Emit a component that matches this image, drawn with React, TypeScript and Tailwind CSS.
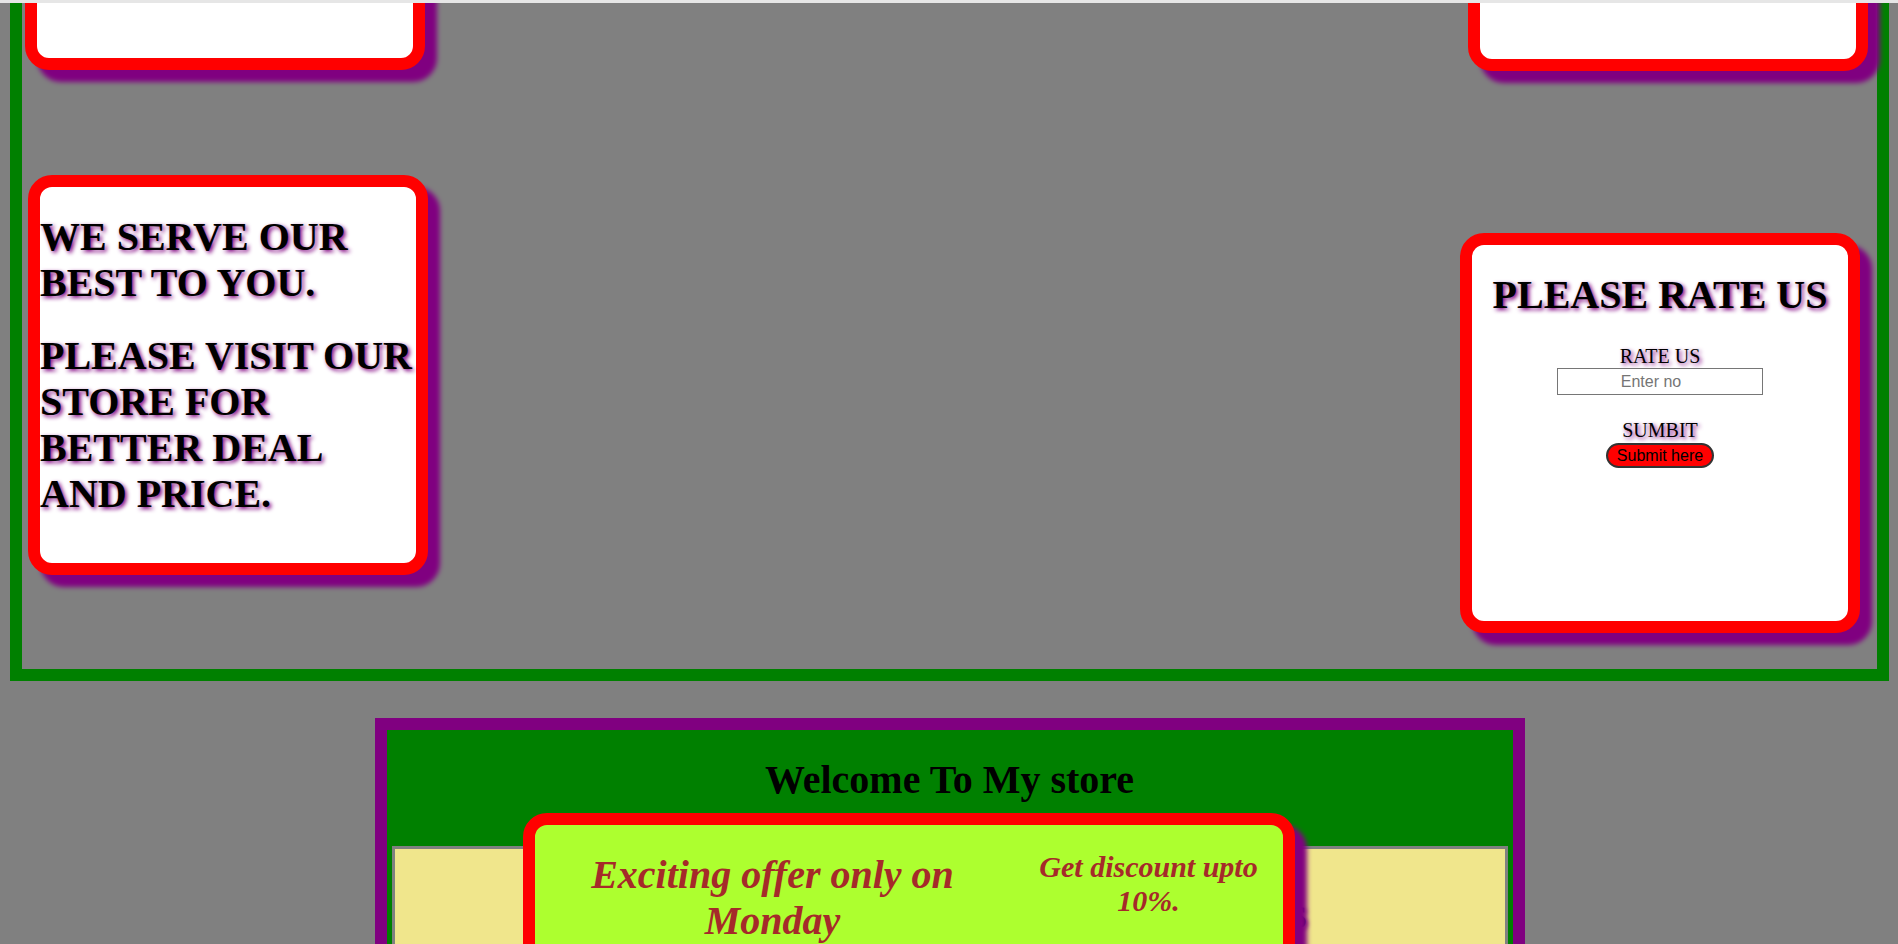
import React from 'react';

const card =
  'w-[400px] h-[400px] shrink-0 bg-white border-[12px] border-[#ff0000] rounded-[24px] shadow-[12px_12px_5px_#800080]';

const glow = '[text-shadow:2px_2px_4px_#800080]';

const RateCard: React.FC = () => (
  <div className={`${card} mt-[162px] mr-[17px] flex flex-col items-center`}>
    <h1 className={`mt-[27px] text-[40px] leading-[46px] font-bold text-black ${glow}`}>PLEASE RATE US</h1>
    <label className={`mt-[27px] text-[20px] leading-[23px] text-black ${glow}`}>RATE US</label>
    <input
      placeholder="Enter no"
      className="w-[206px] h-[27px] border border-[#767676] bg-white text-center pr-[18px] text-[16px] placeholder:text-[#757575] font-['Liberation_Sans',Arial,sans-serif]"
    />
    <label className={`mt-[24px] text-[20px] leading-[23px] text-black ${glow}`}>SUMBIT</label>
    <button className="mt-[1px] h-[25px] px-[9px] bg-[#ff0000] border-2 border-[#333333] rounded-full text-[16px] leading-[18px] text-black font-['Liberation_Sans',Arial,sans-serif]">
      Submit here
    </button>
  </div>
);

export default function App() {
  return (
    <div className="h-[944px] w-full overflow-hidden bg-[#808080] flex flex-col font-['Liberation_Serif','Times_New_Roman',serif]">
      <div className="relative z-10 h-[3px] shrink-0 bg-[#e6e6e6]" />

      <div className="-mt-[365px] pl-[10px] pr-[9px]">
        {/* green store frame */}
        <section className="border-[12px] border-[#008000] pt-[20px] pb-[36px] flex flex-col">
          <div className="flex justify-between items-start">
            <div className={`${card} ml-[3px]`} />
            <div className={`${card} mr-[9px] mt-[1px]`} />
          </div>
          <div className="flex justify-between items-start">
            <div className={`${card} ml-[6px] mt-[104px] pr-[3px]`}>
              <h1 className={`mt-[27px] text-[40px] leading-[46px] font-bold text-black ${glow}`}>
                WE SERVE OUR BEST TO YOU.
              </h1>
              <h1 className={`mt-[27px] text-[40px] leading-[46px] font-bold text-black ${glow}`}>
                PLEASE VISIT OUR STORE FOR BETTER DEAL AND PRICE.
              </h1>
            </div>
            <RateCard />
          </div>
        </section>

        {/* welcome box */}
        <section className="relative mx-auto mt-[37px] w-[1150px] border-[12px] border-[#800080] bg-[#008000] p-[5px]">
          <h1 className="mt-[22px] mb-[43px] text-center text-[40px] leading-[46px] font-bold text-black">
            Welcome To My store
          </h1>
          <div className="h-[400px] border-[3px] border-[#808080] bg-[#f0e68c]">
            <h2 className={`mt-[52px] text-center text-[30.5px] leading-[34px] font-bold text-[#1a0a3a] ${glow}`}>
              WE OFFER THE BEST AND QUALITY PRODUCTS
            </h2>
          </div>

          <div className="absolute left-[136px] top-[83px] w-[772px] h-[400px] border-[12px] border-[#ff0000] rounded-[24px] bg-[#adff2f] shadow-[12px_12px_5px_#800080] grid grid-cols-[476px_1fr] items-start">
            <h1 className="mt-[27px] text-center text-[40px] leading-[46px] font-bold italic text-[#a52a2a]">
              Exciting offer only on Monday
            </h1>
            <h2 className="mt-[25px] pl-[4px] text-center text-[30px] leading-[34px] font-bold italic text-[#a52a2a]">
              Get discount upto 10%.
            </h2>
          </div>
        </section>
      </div>
    </div>
  );
}
